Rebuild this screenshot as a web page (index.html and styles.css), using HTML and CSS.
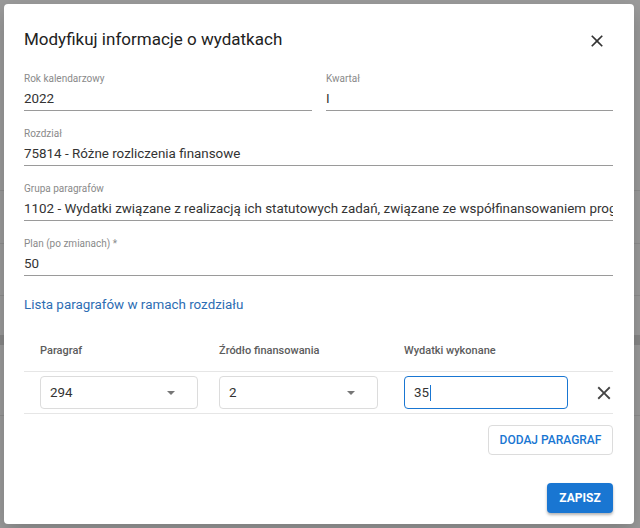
FILE: index.html
```html
<!DOCTYPE html>
<html lang="pl">
<head>
<meta charset="utf-8">
<title>Modyfikuj informacje o wydatkach</title>
<link rel="stylesheet" href="styles.css">
</head>
<body>
<div class="backdrop">
  <div class="dialog">
    <div class="header">
      <h2 class="title">Modyfikuj informacje o wydatkach</h2>
      <svg class="close" viewBox="0 0 24 24" width="20" height="20"><path d="M19 6.41 17.59 5 12 10.59 6.41 5 5 6.41 10.59 12 5 17.59 6.41 19 12 13.41 17.59 19 19 17.59 13.41 12z" fill="#333"/></svg>
    </div>
    <div class="fields">
      <div class="pair">
        <div class="field"><div class="label">Rok kalendarzowy</div><div class="value">2022</div></div>
        <div class="field"><div class="label">Kwartał</div><div class="value">I</div></div>
      </div>
      <div class="field"><div class="label">Rozdział</div><div class="value">75814 - Różne rozliczenia finansowe</div></div>
      <div class="field"><div class="label">Grupa paragrafów</div><div class="value">1102 - Wydatki związane z realizacją ich statutowych zadań, związane ze współfinansowaniem programów i projektów</div></div>
      <div class="field"><div class="label">Plan (po zmianach) *</div><div class="value">50</div></div>
    </div>
    <a class="link">Lista paragrafów w ramach rozdziału</a>
    <div class="table">
      <div class="thead">
        <div>Paragraf</div>
        <div>Źródło finansowania</div>
        <div>Wydatki wykonane</div>
        <div></div>
      </div>
      <div class="trow">
        <div class="select"><span>294</span><span class="arrow"></span></div>
        <div class="select s2"><span>2</span><span class="arrow"></span></div>
        <div class="input"><span>35</span><span class="caret"></span></div>
        <svg class="remove" viewBox="0 0 24 24" width="22" height="22"><path d="M19 6.41 17.59 5 12 10.59 6.41 5 5 6.41 10.59 12 5 17.59 6.41 19 12 13.41 17.59 19 19 17.59 13.41 12z" fill="#444"/></svg>
      </div>
    </div>
    <div class="actions">
      <button class="btn-outline">Dodaj paragraf</button>
    </div>
    <div class="actions footer">
      <button class="btn-primary">Zapisz</button>
    </div>
  </div>
</div>
</body>
</html>
```
FILE: styles.css
```css
* { box-sizing: border-box; }
html, body { margin: 0; padding: 0; }
body {
  font-family: Roboto, "Liberation Sans", Arial, sans-serif;
  width: 640px;
  height: 528px;
  overflow: hidden;
  background:
    linear-gradient(#8e8e8e, #8e8e8e) 0 190px / 100% 1px no-repeat,
    linear-gradient(#8e8e8e, #8e8e8e) 0 243px / 100% 1px no-repeat,
    linear-gradient(#8e8e8e, #8e8e8e) 0 295px / 100% 1px no-repeat,
    linear-gradient(#878787, #878787) 0 335px / 100% 10px no-repeat,
    linear-gradient(#8e8e8e, #8e8e8e) 0 415px / 100% 1px no-repeat,
    #9b9b9b;
}
.backdrop {
  padding: 4px;
}
.dialog {
  width: 630px;
  height: 520px;
  background: #fff;
  border-radius: 4px;
  padding: 23px 21px 13px 20px;
  display: flex;
  flex-direction: column;
  box-shadow: 0 8px 20px rgba(0,0,0,0.2);
}
.header {
  display: flex;
  justify-content: space-between;
  align-items: flex-start;
}
.title {
  margin: 0;
  font-size: 17px;
  line-height: 24px;
  font-weight: 400;
  color: #222;
}
.close {
  margin-top: 4px;
  margin-right: 6px;
}
.fields {
  margin-top: 22px;
  display: flex;
  flex-direction: column;
  gap: 17px;
}
.pair {
  display: grid;
  grid-template-columns: 288px 1fr;
  column-gap: 14px;
}
.field { min-width: 0; }
.label {
  font-size: 10px;
  line-height: 12px;
  color: #8a8a8a;
}
.value {
  margin-top: 4px;
  font-size: 13.4px;
  line-height: 20px;
  color: #333;
  padding-bottom: 1px;
  border-bottom: 1px solid #9a9a9a;
  white-space: nowrap;
  overflow: hidden;
}
.link {
  margin-top: 19px;
  font-size: 13.4px;
  line-height: 20px;
  color: #2d6db3;
}
.table {
  margin-top: 28px;
}
.thead, .trow {
  display: grid;
  grid-template-columns: 179px 185px 184px 1fr;
  padding-left: 16px;
  align-items: center;
}
.thead {
  font-size: 11px;
  line-height: 16px;
  font-weight: 500;
  color: #5c5c5c;
  padding-bottom: 12px;
  border-bottom: 1px solid #e6e6e6;
}
.trow {
  padding-top: 4px;
  padding-bottom: 4px;
  border-bottom: 1px solid #e6e6e6;
}
.select, .input {
  height: 33px;
  border: 1px solid #dcdcdc;
  border-radius: 4px;
  display: flex;
  align-items: center;
  padding-left: 9px;
  font-size: 13.4px;
  color: #333;
}
.select { width: 158px; justify-content: space-between; padding-right: 22px; }
.select.s2 { width: 159px; }
.arrow {
  width: 0;
  height: 0;
  border-left: 4px solid transparent;
  border-right: 4px solid transparent;
  border-top: 4px solid #777;
}
.input {
  width: 164px;
  border-color: #1976d2;
}
.caret {
  width: 1px;
  height: 16px;
  background: #1976d2;
  margin-left: 1px;
}
.remove {
  justify-self: end;
  margin-right: -2px;
}
.actions {
  display: flex;
  justify-content: flex-end;
  margin-top: 11px;
}
.footer { margin-top: 28px; }
button {
  font-family: Roboto, "Liberation Sans", Arial, sans-serif;
  font-size: 12px;
  font-weight: 500;
  text-transform: uppercase;
  height: 30px;
  border-radius: 4px;
  cursor: pointer;
}
.btn-outline {
  width: 125px;
  background: #fff;
  border: 1px solid #dcdcdc;
  color: #1976d2;
  padding: 0;
}
.btn-primary {
  width: 66px;
  background: #1976d2;
  border: none;
  color: #fff;
  font-weight: 700;
  padding: 0;
  box-shadow: 0 2px 3px rgba(0,0,0,0.3);
}
```
